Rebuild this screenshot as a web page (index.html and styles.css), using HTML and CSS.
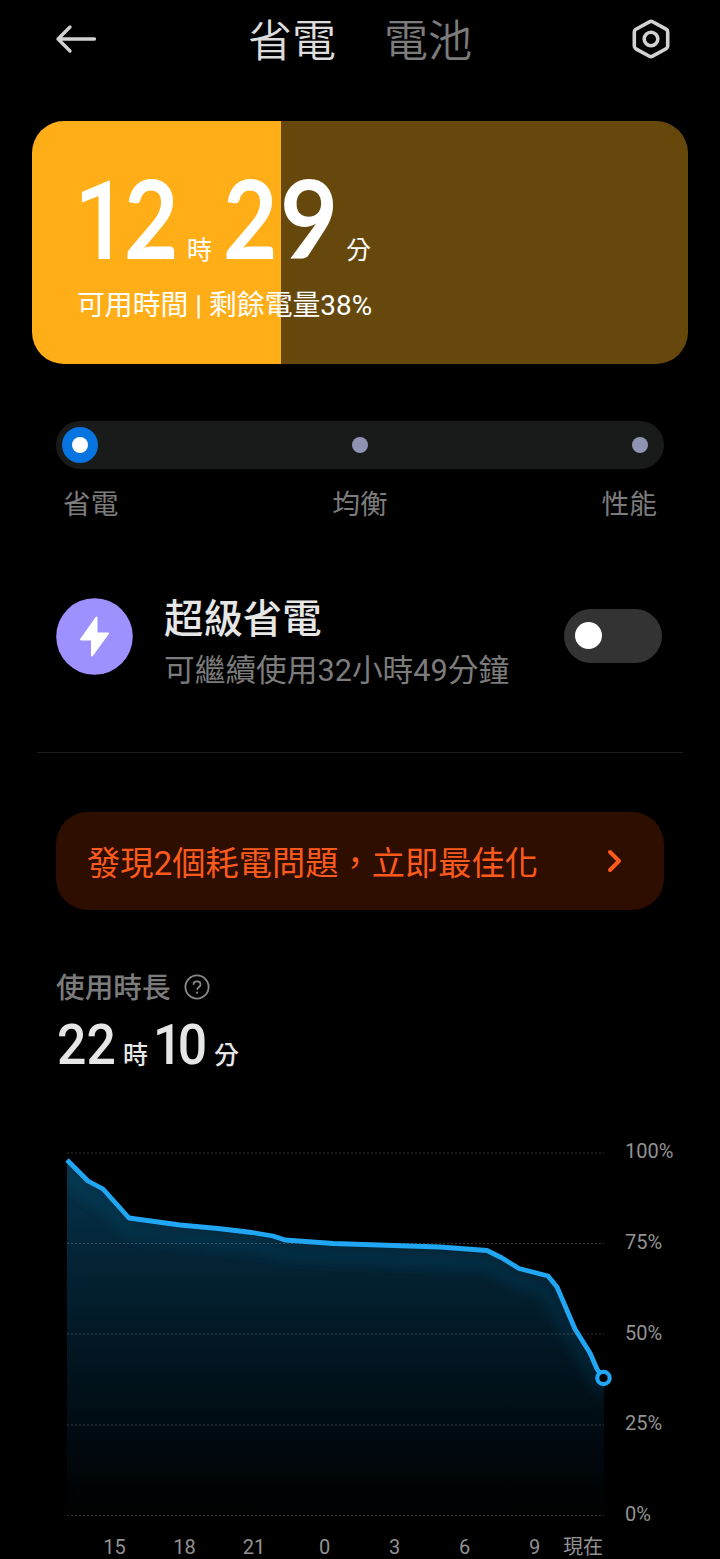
FILE: index.html
```html
<!DOCTYPE html>
<html lang="zh-Hant">
<head>
<meta charset="utf-8">
<title>省電</title>
<link rel="stylesheet" href="styles.css">
</head>
<body>
<header class="topbar">
  <svg class="back" width="42" height="30" viewBox="0 0 42 30"><path d="M15 3 3 15l12 12M3 15h36.500"/></svg>
  <nav class="tabs"><span class="tab active">省電</span><span class="tab">電池</span></nav>
  <svg class="settings" width="42" height="42" viewBox="0 0 42 42"><path d="M19.4 3.8Q21 2.9 22.6 3.8L36.1 11.2Q37.7 12.1 37.7 13.9V28.1Q37.7 29.9 36.1 30.8L22.6 38.2Q21 39.1 19.4 38.2L5.9 30.8Q4.3 29.9 4.3 28.1V13.9Q4.3 12.1 5.9 11.2Z"/><circle cx="21" cy="21" r="6.8"/></svg>
</header>
<main class="content">
  <section class="battery">
    <div class="remaining"><span class="big hours"><b class="one">1</b><b>2</b></span><span class="unit hour-unit">時</span><span class="big minutes"><b>2</b><b class="nine">9</b></span><span class="unit">分</span></div>
    <p class="caption">可用時間 | 剩餘電量38%</p>
  </section>
  <section class="modes">
    <div class="track"><i class="stop selected"></i><i class="stop"></i><i class="stop"></i></div>
    <div class="mode-labels"><span>省電</span><span>均衡</span><span>性能</span></div>
  </section>
  <section class="saver">
    <svg class="bolt" width="77" height="77" viewBox="0 0 77 77"><circle cx="38.5" cy="38.5" r="38.3"/><path d="M40.500 19.500 25 41.500H36V57.500L52 35.500H40.500Z"/></svg>
    <div class="saver-text"><h2>超級省電</h2><p>可繼續使用32小時49分鐘</p></div>
    <span class="switch"></span>
  </section>
  <hr class="divider">
  <section class="alert">
    <span>發現2個耗電問題，立即最佳化</span>
    <svg width="16" height="26" viewBox="0 0 16 26"><path d="M3 4 12 13 3 22"/></svg>
  </section>
  <section class="usage">
    <div class="usage-title"><span>使用時長</span>
      <svg width="26" height="26" viewBox="0 0 26 26"><circle cx="13" cy="13" r="11.6"/><path d="M9.5 10.7Q9.5 7.4 13 7.4T16.5 10.6Q16.5 12 15 13.1T13 15.7"/><circle class="dot" cx="13" cy="18.7" r="1.1"/></svg>
    </div>
    <div class="duration"><span class="num">22</span><span class="dur-unit">時</span><span class="num ten">10</span><span class="dur-unit">分</span></div>
  </section>
  <svg class="chart" width="720" height="429" viewBox="0 1130 720 429">
    <defs>
      <linearGradient id="area" x1="0" y1="1160" x2="0" y2="1515" gradientUnits="userSpaceOnUse">
        <stop offset="0" stop-color="#05344b"/><stop offset=".3" stop-color="#032233"/><stop offset=".7" stop-color="#010e16"/><stop offset="1" stop-color="#000"/>
      </linearGradient>
      <clipPath id="under"><path d="M67 1160 78 1171 88 1181 103 1189 129 1218 180 1225 218 1228.5 252 1232.5 273 1236 285 1240 333 1243.500 440 1247 487 1250.500 502 1258 519 1268.500 548 1276 557 1287 575 1329 590 1353 604 1378V1515H67Z"/></clipPath>
      <filter id="soft" x="-10%" y="-30%" width="120%" height="160%"><feGaussianBlur stdDeviation="6"/></filter>
    </defs>
    <g clip-path="url(#under)">
      <rect x="67" y="1150" width="537" height="366" fill="url(#area)"/>
      <path class="glow" filter="url(#soft)" d="M67 1174 88 1195 103 1203 129 1232 180 1239 252 1246 285 1254 333 1257 440 1261 487 1264 519 1282 545 1290 575 1343 603 1392"/>
    </g>
    <path class="grid" d="M67 1153H604M67 1243.500H604M67 1334H604M67 1425H604M67 1515.500H604"/>
    <path class="line" d="M67 1160 78 1171 88 1181 103 1189 129 1218 180 1225 218 1228.500 252 1232.500 273 1236 285 1240 333 1243.500 440 1247 487 1250.500 502 1258 519 1268.500 548 1276 557 1287 575 1329 590 1353 597 1369 603 1378"/>
    <circle class="point" cx="603.500" cy="1378" r="6.200"/>
    <g class="axis">
      <text x="625" y="1158">100%</text><text x="625" y="1249">75%</text><text x="625" y="1340">50%</text><text x="625" y="1430">25%</text><text x="625" y="1521">0%</text>
    </g>
    <g class="axis hours-axis">
      <text x="114.500" y="1554">15</text><text x="184.500" y="1554">18</text><text x="254" y="1554">21</text><text x="324.500" y="1554">0</text><text x="394.500" y="1554">3</text><text x="464.500" y="1554">6</text><text x="534.500" y="1554">9</text><text x="583" y="1554">現在</text>
    </g>
  </svg>
</main>
</body>
</html>
```

FILE: styles.css
```css
* { box-sizing: border-box; }
body {
  margin: 0;
  width: 720px;
  height: 1559px;
  overflow: hidden;
  background: #000;
  color: #e6e6e6;
  font-family: Roboto, "Noto Sans CJK TC", sans-serif;
}
p, h2 { margin: 0; }
svg { display: block; flex: none; }

.topbar {
  display: flex;
  align-items: center;
  justify-content: space-between;
  height: 78px;
  padding: 0 48px 0 55px;
}
.back, .settings { fill: none; stroke: #d2d2d2; stroke-width: 3.3; stroke-linecap: round; stroke-linejoin: round; }
.settings { stroke-width: 3.6; }
.tabs { display: flex; gap: 48px; padding-top: 5px; margin-right: 7px; font-size: 44px; line-height: 78px; font-weight: 350; }
.tab { color: #7c7c7c; }
.tab.active { color: #dcdcdc; }

.battery {
  height: 243px;
  margin: 43px 32px 0;
  padding: 37px 45px 0 46px;
  border-radius: 32px;
  background: linear-gradient(to right, #ffae17 38%, #66480d 38%);
  color: #fff;
}
.remaining { display: flex; align-items: baseline; height: 118px; line-height: 118px; white-space: nowrap; }
.big { display: flex; align-items: baseline; width: 102px; font-size: 109px; }
.big b { width: 57px; font-family: Lato, Roboto, sans-serif; font-weight: 700; transform: scaleX(.86); transform-origin: left; }
.big .one { width: 50px; margin-left: -4px; font-family: Roboto, sans-serif; font-weight: 500; font-size: 110px; letter-spacing: -12px; transform: scaleX(.87); }
.big .nine { transform: scaleX(.92); }
.unit { width: 25px; margin-left: 7px; font-size: 25px; }
.minutes { width: 116px; margin-left: 11px; }
.caption { margin-top: 8px; margin-left: -1px; font-size: 27.850px; line-height: 44px; }

.modes { margin: 57px 56px 0; }
.track {
  display: flex;
  align-items: center;
  justify-content: space-between;
  height: 48px;
  padding: 0 16px;
  border-radius: 24px;
  background: #191b1a;
}
.stop { width: 16px; height: 16px; border-radius: 50%; background: #8f93b4; }
.selected { background: #fff; box-shadow: 0 0 0 10px #0874df; }
.mode-labels { display: flex; justify-content: space-between; padding: 0 7px; margin-top: 16px; font-size: 27.700px; line-height: 40px; color: #7c7c7c; }

.saver { display: flex; align-items: center; height: 100px; margin: 61px 58px 0 56px; }
.bolt circle { fill: #9d90ff; }
.bolt path { fill: #fff; stroke: #fff; stroke-width: 2; stroke-linejoin: round; }
.saver-text { flex: 1; margin-left: 31px; padding-top: 15px; }
.saver-text h2 { font-size: 39.400px; line-height: 54px; font-weight: 500; }
.saver-text p { font-size: 30.700px; line-height: 48px; color: #7c7c7c; white-space: nowrap; }
.switch { width: 98px; height: 54px; padding: 13px 11px; border-radius: 27px; background: #333; }
.switch::before { content: ""; display: block; width: 27px; height: 27px; border-radius: 50%; background: #fff; }

.divider { height: 1px; margin: 66px 37px 0; border: 0; background: #1d1d1d; }

.alert {
  display: flex;
  align-items: center;
  justify-content: space-between;
  height: 98px;
  margin: 59px 56px 0;
  padding: 0 41px 0 31px;
  border-radius: 32px;
  background: #2e0e00;
  color: #fb5a1d;
  font-size: 33.250px;
}
.alert span { padding-bottom: 2px; }
.alert path { fill: none; stroke: #fb5a1d; stroke-width: 4; stroke-linecap: round; stroke-linejoin: round; }

.usage { height: 220px; padding: 57px 56px 0; }
.usage-title { display: flex; align-items: center; gap: 13px; height: 40px; font-size: 28.700px; line-height: 40px; font-weight: 500; color: #7c7c7c; }
.usage-title span { padding-top: 2px; }
.usage-title svg { fill: none; stroke: #8a8a8a; stroke-width: 1.8; }
.usage-title .dot { fill: #8a8a8a; stroke: none; }
.duration { display: flex; align-items: baseline; margin-top: 8px; line-height: 60px; white-space: nowrap; }
.num { width: 58px; margin-left: 1px; font-size: 55px; font-weight: 500; transform: scaleX(.94); transform-origin: left; }
.dur-unit { width: 25px; margin-left: 8px; font-size: 25px; font-weight: 500; }
.ten { margin-left: 5px; width: 53px; letter-spacing: -5px; }

.grid { fill: none; stroke: #fff; stroke-opacity: .2; stroke-width: 1; stroke-dasharray: 2 2; }
.glow { fill: none; stroke: #17577b; stroke-opacity: .22; stroke-width: 14; }
.line { fill: none; stroke: #20a6f3; stroke-width: 4.800; stroke-linejoin: round; }
.point { fill: #000; stroke: #20a6f3; stroke-width: 4.200; }
.axis { fill: #929292; font-size: 20px; }
.hours-axis { text-anchor: middle; }
```
